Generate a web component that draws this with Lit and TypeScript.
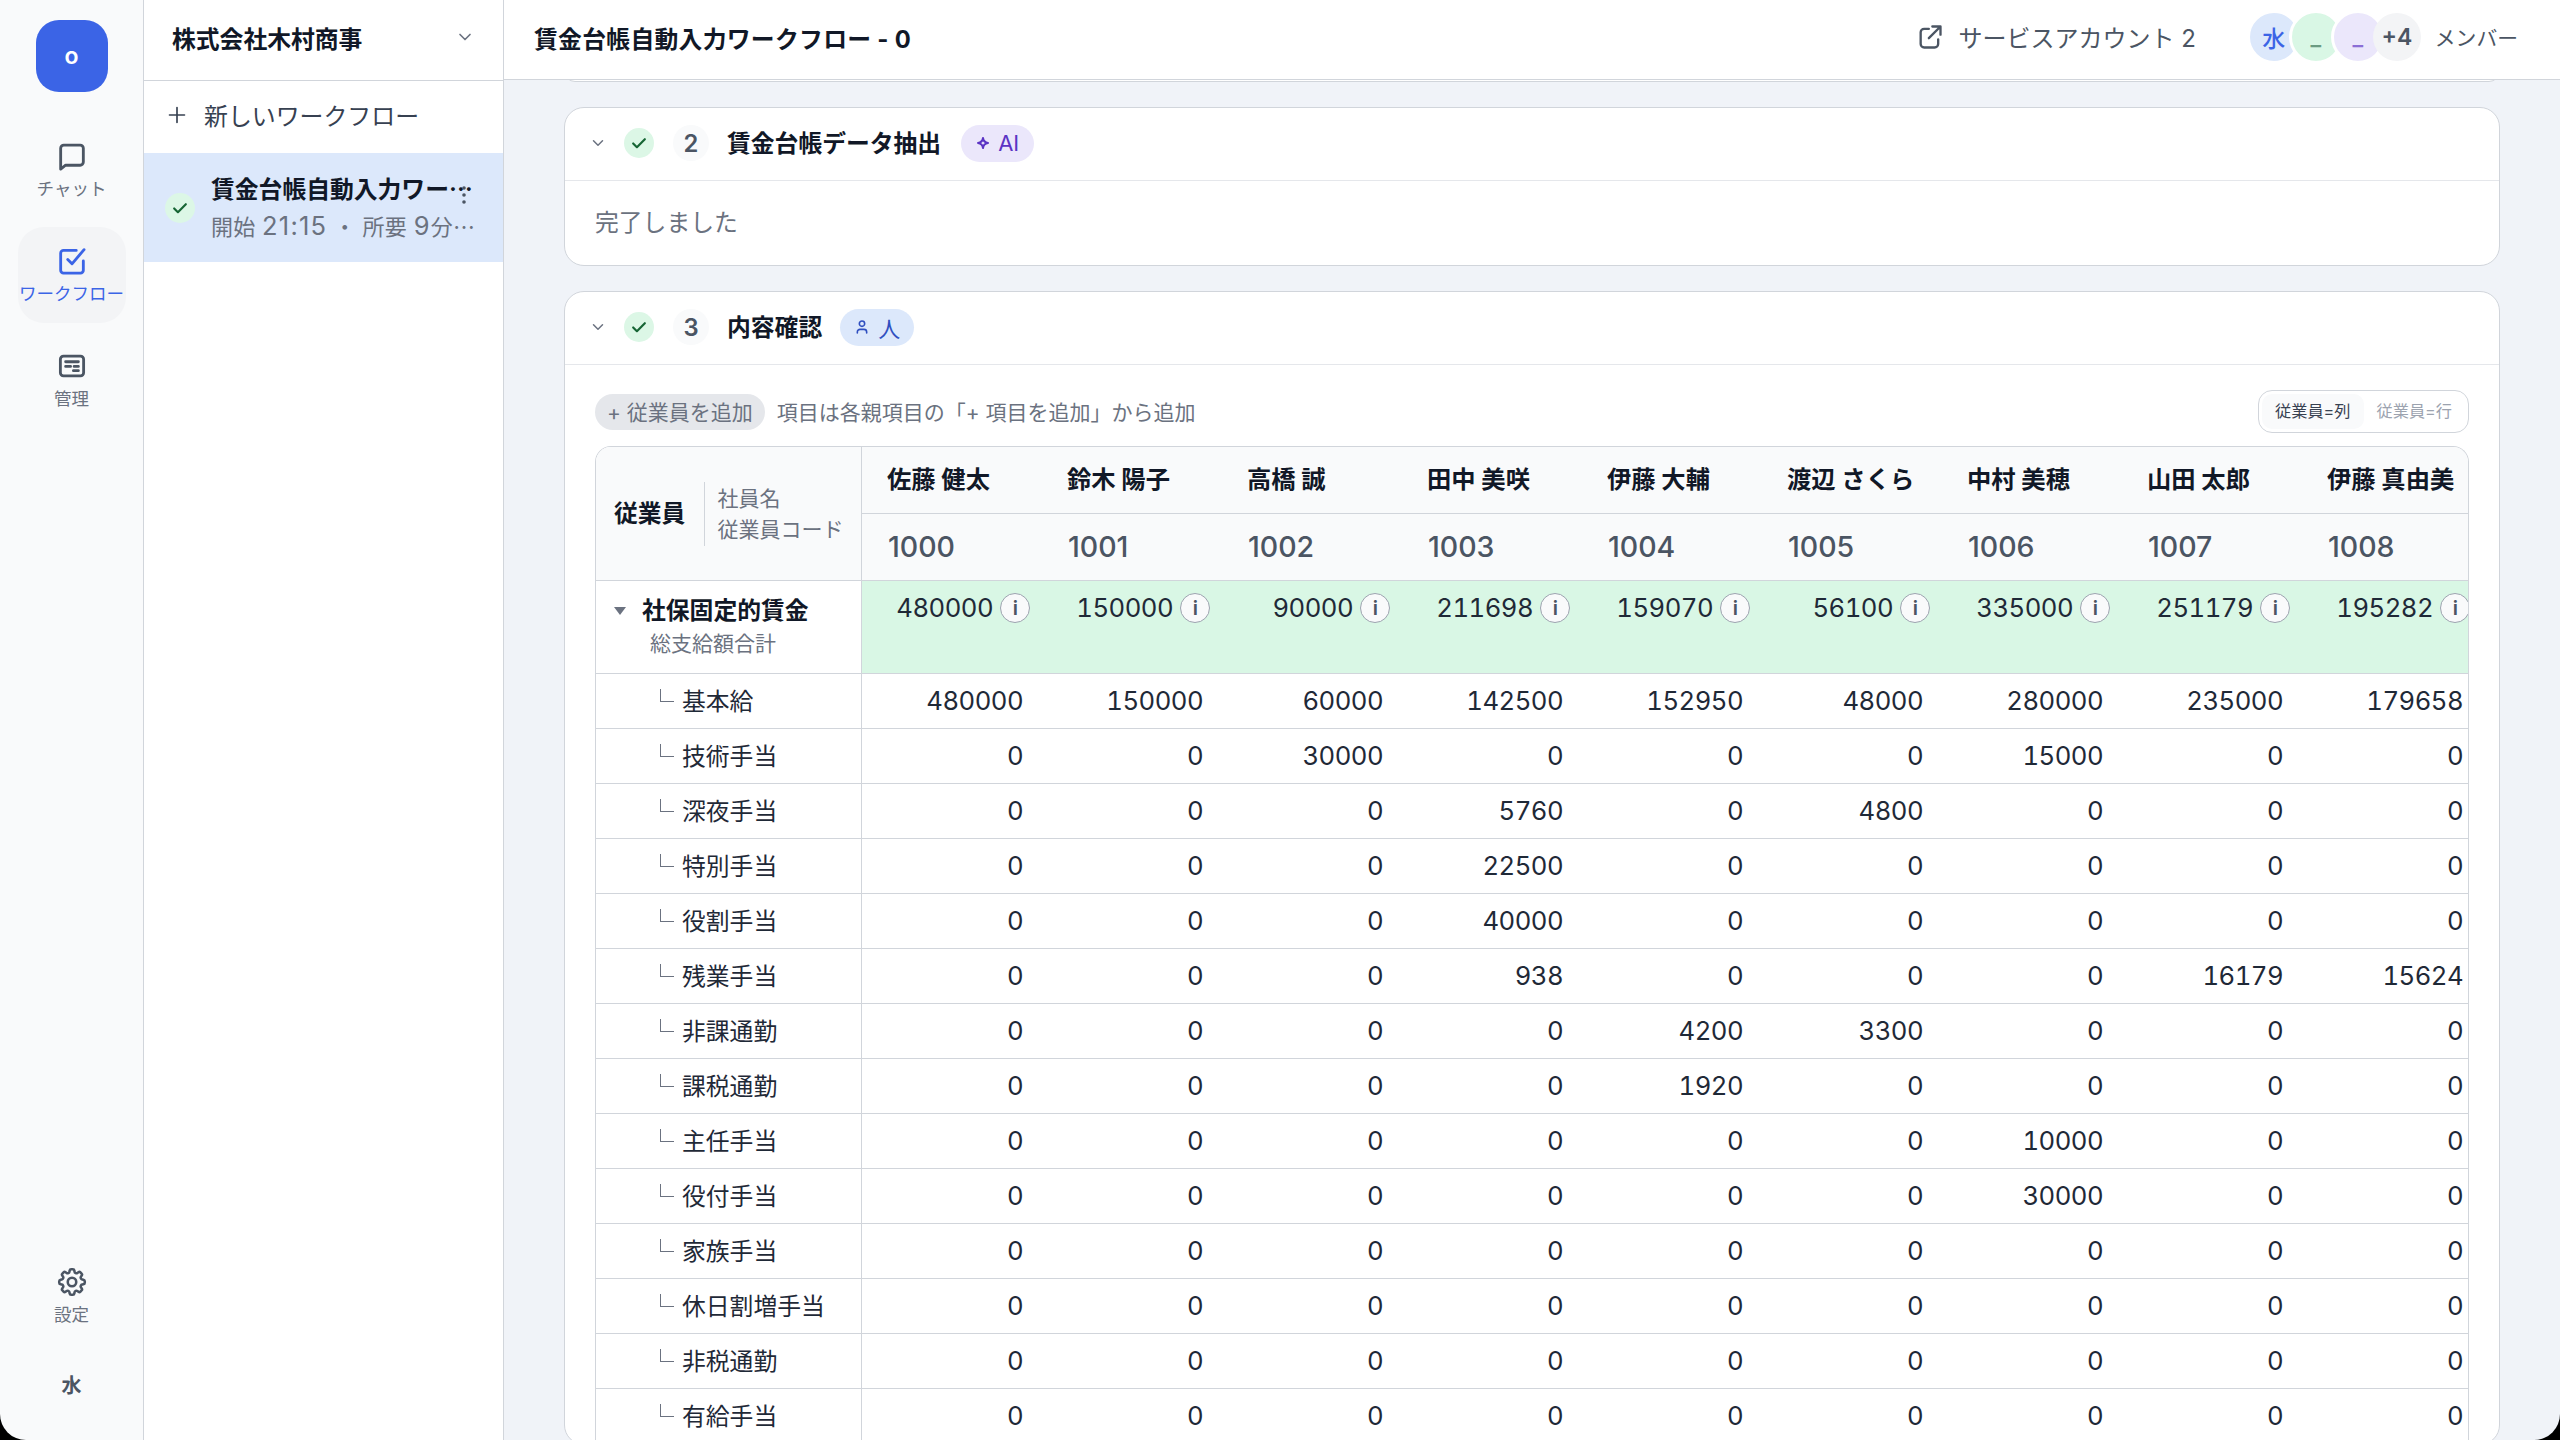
import { LitElement, html, css, svg } from 'lit';
import { customElement } from 'lit/decorators.js';

const employees = [
  ['佐藤 健太', '1000', 480000],
  ['鈴木 陽子', '1001', 150000],
  ['高橋 誠', '1002', 90000],
  ['田中 美咲', '1003', 211698],
  ['伊藤 大輔', '1004', 159070],
  ['渡辺 さくら', '1005', 56100],
  ['中村 美穂', '1006', 335000],
  ['山田 太郎', '1007', 251179],
  ['伊藤 真由美', '1008', 195282],
];

const rows: [string, number[]][] = [
  ['基本給', [480000, 150000, 60000, 142500, 152950, 48000, 280000, 235000, 179658]],
  ['技術手当', [0, 0, 30000, 0, 0, 0, 15000, 0, 0]],
  ['深夜手当', [0, 0, 0, 5760, 0, 4800, 0, 0, 0]],
  ['特別手当', [0, 0, 0, 22500, 0, 0, 0, 0, 0]],
  ['役割手当', [0, 0, 0, 40000, 0, 0, 0, 0, 0]],
  ['残業手当', [0, 0, 0, 938, 0, 0, 0, 16179, 15624]],
  ['非課通勤', [0, 0, 0, 0, 4200, 3300, 0, 0, 0]],
  ['課税通勤', [0, 0, 0, 0, 1920, 0, 0, 0, 0]],
  ['主任手当', [0, 0, 0, 0, 0, 0, 10000, 0, 0]],
  ['役付手当', [0, 0, 0, 0, 0, 0, 30000, 0, 0]],
  ['家族手当', [0, 0, 0, 0, 0, 0, 0, 0, 0]],
  ['休日割増手当', [0, 0, 0, 0, 0, 0, 0, 0, 0]],
  ['非税通勤', [0, 0, 0, 0, 0, 0, 0, 0, 0]],
  ['有給手当', [0, 0, 0, 0, 0, 0, 0, 0, 0]],
];

const icon = (size: number, body: unknown, sw = 2) => html`<svg
  width=${size}
  height=${size}
  viewBox="0 0 24 24"
  fill="none"
  stroke="currentColor"
  stroke-width=${sw}
  stroke-linecap="round"
  stroke-linejoin="round"
>${body}</svg>`;

const chevron = (size: number) => icon(size, svg`<path d="M6 9l6 6 6-6" />`);
const check = (size: number) => icon(size, svg`<path d="M5 12.5l4.5 4.5L19 7.5" />`, 2.6);

@customElement('app-root')
export class AppRoot extends LitElement {
  static styles = css`
    :host {
      display: block;
      width: 2560px;
      height: 1440px;
      background: #000;
      font-family: Inter, 'Noto Sans CJK JP', sans-serif;
      color: #111827;
      overflow: hidden;
    }
    .app {
      display: flex;
      height: 1440px;
    }
    .rail {
      width: 144px;
      flex: none;
      box-sizing: border-box;
      border-right: 1px solid #d1d5db;
      background: #f9fafb;
      border-bottom-left-radius: 26px;
      display: flex;
      flex-direction: column;
      align-items: center;
      padding-top: 20px;
    }
    .logo {
      width: 72px;
      height: 72px;
      border-radius: 23px;
      background: #3b64e6;
      color: #fff;
      font-size: 23px;
      font-weight: 600;
      display: flex;
      align-items: center;
      justify-content: center;
      margin-bottom: 30px;
    }
    .nav {
      width: 108px;
      height: 96px;
      border-radius: 26px;
      display: flex;
      flex-direction: column;
      align-items: center;
      justify-content: center;
      gap: 4px;
      color: #4b5563;
      font-size: 17.5px;
      line-height: 24px;
      white-space: nowrap;
      margin-bottom: 9px;
    }
    .nav span {
      color: #6b7280;
    }
    .nav.active {
      background: #f3f4f6;
      color: #3b64e6;
    }
    .nav.active span {
      color: #3b64e6;
    }
    .nav.last {
      margin: 0;
    }
    .spacer {
      flex: 1;
    }
    .me {
      font-size: 20px;
      font-weight: 600;
      color: #4b5563;
      height: 40px;
      line-height: 40px;
      margin: 22px 0 34px;
    }
    .panel {
      width: 360px;
      flex: none;
      box-sizing: border-box;
      border-right: 1px solid #d1d5db;
      background: #fff;
    }
    .panel-head {
      height: 81px;
      box-sizing: border-box;
      border-bottom: 1px solid #d1d5db;
      padding: 0 28px 6px;
      display: flex;
      align-items: center;
      justify-content: space-between;
      color: #6b7280;
    }
    .panel-head b {
      font-size: 23.8px;
      font-weight: 700;
      color: #111827;
    }
    .new {
      height: 72px;
      box-sizing: border-box;
      display: flex;
      align-items: center;
      gap: 17px;
      padding: 0 0 5px 23px;
      font-size: 23.9px;
      color: #374151;
    }
    .item {
      height: 109px;
      background: #dce8fb;
      display: flex;
      align-items: center;
      padding-left: 21px;
      gap: 16px;
      position: relative;
    }
    .ok {
      width: 30px;
      height: 30px;
      border-radius: 50%;
      background: #dcf7e6;
      color: #166534;
      display: flex;
      align-items: center;
      justify-content: center;
      flex: none;
    }
    .item-text {
      width: 264px;
      min-width: 0;
      padding-bottom: 2px;
    }
    .item-text div {
      overflow: hidden;
      white-space: nowrap;
      text-overflow: ellipsis;
      font-family: 'Noto Sans CJK JP', sans-serif;
    }
    .item-text span {
      font-family: Inter, 'Noto Sans CJK JP', sans-serif;
    }
    .item-title {
      font-size: 23.8px;
      font-weight: 700;
      line-height: 38px;
      color: #111827;
    }
    .item-sub {
      font-size: 22px;
      line-height: 36px;
      margin-top: -2px;
      color: #6b7280;
      letter-spacing: 0.3px;
    }
    .item-sub .n {
      font-size: 25.5px;
      letter-spacing: 1.2px;
    }
    .dots {
      position: absolute;
      top: 32px;
      left: 316px;
      color: #4b5563;
    }
    .main {
      flex: 1;
      min-width: 0;
      background: #f0f3f8;
      border-bottom-right-radius: 26px;
      display: flex;
      flex-direction: column;
      overflow: hidden;
    }
    .top {
      height: 80px;
      flex: none;
      box-sizing: border-box;
      background: #fff;
      border-bottom: 1px solid #d1d5db;
      padding: 0 42px 5px 30px;
      display: flex;
      align-items: center;
    }
    .top b {
      font-size: 23.8px;
      font-weight: 700;
      flex: 1;
      letter-spacing: 0.3px;
    }
    .service {
      display: flex;
      align-items: center;
      gap: 14px;
      color: #4b5563;
      font-size: 24px;
      margin-right: 51px;
      white-space: nowrap;
    }
    .service span {
      margin-top: -2px;
    }
    .avatars {
      display: flex;
      align-items: center;
    }
    .avatar {
      width: 48px;
      height: 48px;
      border-radius: 50%;
      border: 3px solid #fff;
      margin-left: -12px;
      display: flex;
      align-items: center;
      justify-content: center;
      font-size: 23px;
      font-weight: 500;
    }
    .avatar:first-child {
      margin-left: 0;
    }
    .a1 { background: #dce8fb; color: #3b64e6; }
    .a2 { background: #d9f7e5; color: #6b9b82; }
    .a3 { background: #ebe7fb; color: #8b6fd6; }
    .a4 { background: #f3f4f6; color: #4b5563; border: 0; font-weight: 600; }
    .members {
      margin-left: 14px;
      font-size: 20.8px;
      color: #4b5563;
      white-space: nowrap;
    }
    .scroll {
      flex: 1;
      min-height: 0;
      overflow: hidden;
      padding: 0 60px;
      display: flex;
      flex-direction: column;
      gap: 25px;
    }
    .card {
      background: #fff;
      border: 1px solid #d1d5db;
      border-radius: 20px;
      flex: none;
    }
    .stub {
      height: 20px;
      margin-top: -20px;
    }
    .card-head {
      height: 73px;
      box-sizing: border-box;
      border-bottom: 1px solid #e5e7eb;
      padding: 0 0 2px 24px;
      display: flex;
      align-items: center;
      font-size: 23.8px;
      font-weight: 700;
      white-space: nowrap;
    }
    .ttl {
      margin-top: -3px;
    }
    .chev {
      color: #6b7280;
      display: flex;
      margin-right: 17px;
    }
    .num {
      width: 36px;
      height: 36px;
      border-radius: 50%;
      background: #f9fafb;
      color: #4b5563;
      display: flex;
      align-items: center;
      justify-content: center;
      font-weight: 600;
      margin: 0 18px 0 19px;
    }
    .tag {
      height: 37px;
      border-radius: 19px;
      display: flex;
      align-items: center;
      gap: 8px;
      font-size: 22px;
      font-weight: 400;
    }
    .tag.ai {
      background: #ebe7fb;
      color: #5b34c4;
      padding: 0 15px;
      margin-left: 20px;
    }
    .tag.human {
      background: #dce8fb;
      color: #2f4fc0;
      padding: 0 14px;
      margin-left: 18px;
    }
    .done {
      height: 84px;
      box-sizing: border-box;
      padding: 0 30px 5px;
      display: flex;
      align-items: center;
      font-size: 23.8px;
      color: #6b7280;
    }
    .body {
      padding: 25px 30px 0;
    }
    .tools {
      height: 43px;
      display: flex;
      align-items: center;
      margin-bottom: 13px;
      font-size: 21px;
      color: #6b7280;
      white-space: nowrap;
    }
    .hint {
      margin-top: -2px;
    }
    .add {
      height: 36px;
      box-sizing: border-box;
      padding: 0 12px 2px;
      border-radius: 18px;
      background: #e5e7eb;
      color: #6b7280;
      display: flex;
      align-items: center;
      margin-right: 12px;
    }
    .toggle {
      margin-left: auto;
      height: 43px;
      box-sizing: border-box;
      border: 1px solid #d1d5db;
      border-radius: 14px;
      padding: 3px;
      display: flex;
      font-size: 16.2px;
      color: #9ca3af;
    }
    .toggle span {
      padding: 0 13px;
      line-height: 35px;
      border-radius: 10px;
    }
    .toggle .on {
      background: #f9fafb;
      color: #374151;
    }
    .table {
      border: 1px solid #d1d5db;
      border-bottom: 0;
      border-radius: 16px 16px 0 0;
      overflow: hidden;
    }
    .row {
      display: grid;
      grid-template-columns: 266px repeat(9, 180px);
      border-bottom: 1px solid #d1d5db;
      box-sizing: border-box;
    }
    .row > * {
      box-sizing: border-box;
    }
    .stick {
      border-right: 1px solid #d1d5db;
      display: flex;
      align-items: center;
    }
    .head {
      background: #f9fafb;
      height: 134px;
    }
    .head-left {
      padding-left: 18px;
      background: #f9fafb;
      gap: 12px;
    }
    .head-left b {
      font-size: 23.8px;
      font-weight: 700;
      padding-right: 19px;
      height: 64px;
      line-height: 64px;
      border-right: 1px solid #d1d5db;
    }
    .head-left div {
      font-size: 21px;
      line-height: 31px;
      color: #6b7280;
      white-space: nowrap;
    }
    .head-col .name {
      height: 66px;
      line-height: 64px;
      padding-left: 25px;
      font-size: 24.3px;
      font-weight: 700;
      border-bottom: 1px solid #d1d5db;
      white-space: nowrap;
    }
    .head-col .code {
      height: 66px;
      line-height: 66px;
      padding-left: 26px;
      font-size: 28.5px;
      font-weight: 500;
      color: #4b5563;
    }
    .total {
      height: 93px;
    }
    .total-left {
      display: block;
      padding: 12px 0 0 18px;
    }
    .total-left .t {
      display: flex;
      align-items: center;
      gap: 16px;
      font-size: 23.8px;
      font-weight: 700;
      line-height: 36px;
    }
    .tri {
      width: 0;
      height: 0;
      border-left: 6px solid transparent;
      border-right: 6px solid transparent;
      border-top: 8px solid #6b7280;
    }
    .total-left .s {
      font-size: 21px;
      line-height: 30px;
      color: #6b7280;
      padding-left: 36px;
    }
    .total-cell {
      background: #d9f7e5;
      padding: 12px 12px 0 0;
      display: flex;
      justify-content: flex-end;
      align-items: flex-start;
      gap: 7px;
      font-size: 25.7px;
      font-variant-numeric: tabular-nums;
      letter-spacing: -0.55px;
      line-height: 30px;
      color: #1f2937;
    }
    .i {
      width: 30px;
      height: 30px;
      box-sizing: border-box;
      border-radius: 50%;
      border: 1px solid #9ca3af;
      background: #f9fafb;
      color: #4b5563;
      font-size: 20px;
      font-weight: 600;
      line-height: 28px;
      text-align: center;
      flex: none;
    }
    .line {
      height: 55px;
    }
    .label {
      padding: 0 0 3px 64px;
      gap: 8px;
      font-size: 23.8px;
      color: #1f2937;
      white-space: nowrap;
    }
    .elbow {
      width: 14px;
      height: 13px;
      box-sizing: border-box;
      border-left: 1.5px solid #6b7280;
      border-bottom: 1.5px solid #6b7280;
      margin-top: -8px;
      flex: none;
    }
    .cell {
      padding-right: 19px;
      text-align: right;
      font-size: 25.7px;
      font-variant-numeric: tabular-nums;
      letter-spacing: -0.55px;
      line-height: 54px;
      color: #1f2937;
    }
  `;

  render() {
    return html`
      <div class="app">
        <nav class="rail">
          <div class="logo">o</div>
          <div class="nav">
            ${icon(34, svg`<path d="M7.5 18.5 L4 21.2 V6.5 a2.2 2.2 0 0 1 2.2-2.2 h11.6 a2.2 2.2 0 0 1 2.2 2.2 v9.8 a2.2 2.2 0 0 1-2.2 2.2 z" />`)}
            <span>チャット</span>
          </div>
          <div class="nav active">
            ${icon(34, svg`<path d="M9 11l3 3 8.5-10" /><path d="M20 12v6.5a2 2 0 0 1-2 2H6a2 2 0 0 1-2-2V6.500a2 2 0 0 1 2-2h9" />`)}
            <span>ワークフロー</span>
          </div>
          <div class="nav">
            ${icon(34, svg`<rect x="3.800" y="5" width="16.400" height="14" rx="2.200" /><path d="M7.500 9h9M7.500 12.300h3.500M13.500 12.300h3M13 15.300h3.500" />`)}
            <span>管理</span>
          </div>
          <div class="spacer"></div>
          <div class="nav last">
            ${icon(34, svg`<path d="M10.343 3.94c.09-.542.56-.94 1.11-.94h1.093c.55 0 1.02.398 1.11.94l.149.894c.07.424.384.764.78.93.398.164.855.142 1.205-.108l.737-.527a1.125 1.125 0 0 1 1.45.12l.773.774c.39.389.44 1.002.12 1.45l-.527.737c-.25.35-.272.806-.107 1.204.165.397.505.71.93.78l.893.15c.543.09.94.559.94 1.109v1.094c0 .55-.397 1.02-.94 1.11l-.894.149c-.424.07-.764.383-.929.78-.165.398-.143.854.107 1.204l.527.738c.32.447.269 1.06-.12 1.45l-.774.773a1.125 1.125 0 0 1-1.449.12l-.738-.527c-.35-.25-.806-.272-1.203-.107-.398.165-.71.505-.781.929l-.149.894c-.09.542-.56.94-1.11.94h-1.094c-.55 0-1.019-.398-1.11-.94l-.148-.894c-.071-.424-.384-.764-.781-.93-.398-.164-.854-.142-1.204.108l-.738.527c-.447.32-1.06.269-1.45-.12l-.773-.774a1.125 1.125 0 0 1-.12-1.45l.527-.737c.25-.35.272-.806.108-1.204-.165-.397-.506-.71-.93-.78l-.894-.15c-.542-.09-.94-.56-.94-1.109v-1.094c0-.55.398-1.02.94-1.11l.894-.149c.424-.07.765-.383.93-.78.165-.398.143-.854-.108-1.204l-.526-.738a1.125 1.125 0 0 1 .12-1.45l.773-.773a1.125 1.125 0 0 1 1.45-.12l.737.527c.35.25.807.272 1.204.107.397-.165.71-.505.78-.929l.15-.894Z" /><path d="M15 12a3 3 0 1 1-6 0 3 3 0 0 1 6 0Z" />`, 1.8)}
            <span>設定</span>
          </div>
          <div class="me">水</div>
        </nav>

        <aside class="panel">
          <div class="panel-head"><b>株式会社木村商事</b>${chevron(20)}</div>
          <div class="new">
            ${icon(20, svg`<path d="M12 3v18M3 12h18" />`)}
            新しいワークフロー
          </div>
          <div class="item">
            <div class="ok">${check(20)}</div>
            <div class="item-text">
              <div class="item-title"><span>賃金台帳自動入力ワークフロー</span></div>
              <div class="item-sub"><span>開始 <span class="n">21:15</span> ・ 所要 <span class="n">9</span>分<span class="n">12</span>秒</span></div>
            </div>
            <div class="dots">
              <svg width="8" height="20" viewBox="0 0 8 20" fill="currentColor">
                <circle cx="4" cy="3" r="1.8" /><circle cx="4" cy="10" r="1.8" /><circle cx="4" cy="17" r="1.8" />
              </svg>
            </div>
          </div>
        </aside>

        <section class="main">
          <header class="top">
            <b>賃金台帳自動入力ワークフロー - 0</b>
            <div class="service">
              ${icon(28, svg`<path d="M11 5H7a3 3 0 0 0-3 3v10a3 3 0 0 0 3 3h9a3 3 0 0 0 3-3v-4" /><path d="M14 3h7v7M21 3l-10 10" />`)}
              <span>サービスアカウント 2</span>
            </div>
            <div class="avatars">
              <div class="avatar a1">水</div>
              <div class="avatar a2">_</div>
              <div class="avatar a3">_</div>
              <div class="avatar a4">+4</div>
            </div>
            <div class="members">メンバー</div>
          </header>

          <div class="scroll">
            <div class="card stub"></div>

            <div class="card">
              <div class="card-head">
                <span class="chev">${chevron(18)}</span>
                <div class="ok">${check(20)}</div>
                <div class="num">2</div>
                <span class="ttl">賃金台帳データ抽出</span>
                <div class="tag ai">
                  <svg width="14" height="14" viewBox="0 0 14 14" fill="none" stroke="currentColor" stroke-width="2" stroke-linejoin="round">
                    <path d="M7 2 Q7.600 6.400 12 7 Q7.600 7.600 7 12 Q6.400 7.600 2 7 Q6.400 6.400 7 2 Z" />
                  </svg>
                  AI
                </div>
              </div>
              <div class="done">完了しました</div>
            </div>

            <div class="card">
              <div class="card-head">
                <span class="chev">${chevron(18)}</span>
                <div class="ok">${check(20)}</div>
                <div class="num">3</div>
                <span class="ttl">内容確認</span>
                <div class="tag human">
                  ${icon(16, svg`<circle cx="12" cy="7" r="4" /><path d="M5 21v-1.500a4 4 0 0 1 4-4h6a4 4 0 0 1 4 4V21" />`, 2.4)}
                  人
                </div>
              </div>
              <div class="body">
                <div class="tools">
                  <span class="add">+ 従業員を追加</span>
                  <span class="hint">項目は各親項目の「+ 項目を追加」から追加</span>
                  <div class="toggle"><span class="on">従業員=列</span><span>従業員=行</span></div>
                </div>
                <div class="table">
                  <div class="row head">
                    <div class="stick head-left">
                      <b>従業員</b>
                      <div>社員名<br />従業員コード</div>
                    </div>
                    ${employees.map(
                      (e) => html`<div class="head-col">
                        <div class="name">${e[0]}</div>
                        <div class="code">${e[1]}</div>
                      </div>`
                    )}
                  </div>
                  <div class="row total">
                    <div class="stick total-left">
                      <div class="t"><span class="tri"></span>社保固定的賃金</div>
                      <div class="s">総支給額合計</div>
                    </div>
                    ${employees.map(
                      (e) => html`<div class="total-cell">${e[2]}<span class="i">i</span></div>`
                    )}
                  </div>
                  ${rows.map(
                    ([label, values]) => html`<div class="row line">
                      <div class="stick label"><span class="elbow"></span>${label}</div>
                      ${values.map((v) => html`<div class="cell">${v}</div>`)}
                    </div>`
                  )}
                </div>
              </div>
            </div>
          </div>
        </section>
      </div>
    `;
  }
}
